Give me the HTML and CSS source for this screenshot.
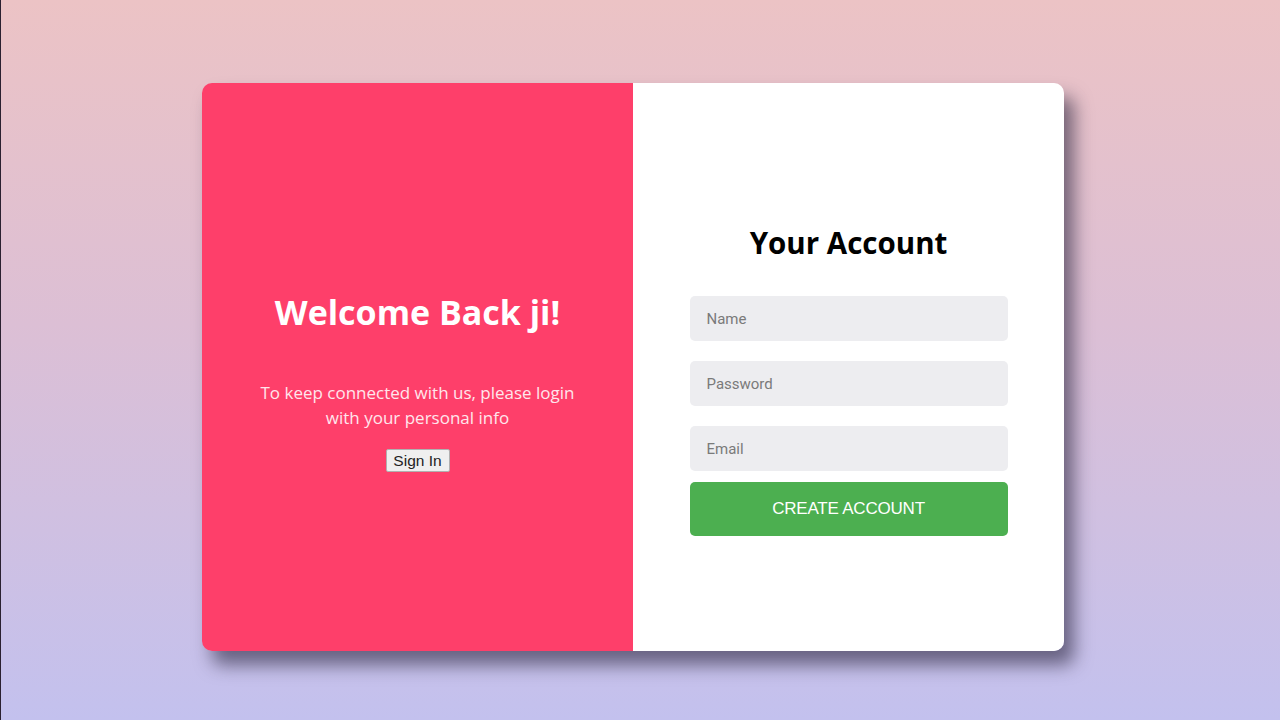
FILE: index.html
```html
<!DOCTYPE html>
<html lang="en">
<head>
<meta charset="utf-8">
<title>Your Account</title>
<link rel="stylesheet" href="styles.css">
</head>
<body>
<main class="page">
  <div class="card">
    <section class="panel panel-left">
      <h1 class="welcome">Welcome Back ji!</h1>
      <p class="lead">To keep connected with us, please login with your personal info</p>
      <button class="signin" type="button">Sign In</button>
    </section>
    <section class="panel panel-right">
      <h2 class="title">Your Account</h2>
      <form class="form">
        <input class="field" type="text" placeholder="Name">
        <input class="field" type="password" placeholder="Password">
        <input class="field" type="email" placeholder="Email">
        <button class="create" type="button">CREATE ACCOUNT</button>
      </form>
    </section>
  </div>
</main>
</body>
</html>
```
FILE: styles.css
```css
* { box-sizing: border-box; }
html, body { margin: 0; padding: 0; height: 100%; }
body {
  font-family: "Open Sans", "Noto Sans", sans-serif;
  background: linear-gradient(180deg, #ecc3c5 0%, #dcbfd5 45%, #c3c1ee 100%);
  border-left: 1px solid #2a2030;
}
.page {
  height: 720px;
  display: flex;
  justify-content: flex-start;
  padding-top: 83px;
  padding-left: 201px;
}
.card {
  width: 862px;
  height: 568px;
  display: flex;
  border-radius: 10px;
  overflow: hidden;
  box-shadow: 10px 14px 18px rgba(40, 35, 60, 0.6);
}
.panel {
  width: 431px;
  display: flex;
  flex-direction: column;
  align-items: center;
}
.panel-left {
  background: #fe3f6a;
  color: #fff;
  padding-top: 205px;
}
.welcome {
  margin: 0;
  font-family: "Open Sans", sans-serif;
  font-weight: 700;
  font-size: 34px;
  line-height: 48px;
}
.lead {
  margin: 44px 0 0;
  width: 340px;
  text-align: center;
  font-size: 17px;
  line-height: 25px;
  color: #ffe6ec;
}
.signin {
  margin-top: 19px;
  width: 64px;
  height: 23px;
  padding: 0;
  font-family: "Liberation Sans", Arial, sans-serif;
  font-size: 15.5px;
  color: #222;
  background: #efefef;
  border: 1px solid #b0b0b0;
  border-radius: 2px;
}
.panel-right {
  background: #fff;
  padding-top: 139px;
}
.title {
  margin: 0;
  font-family: "Open Sans", sans-serif;
  font-weight: 700;
  font-size: 29.5px;
  line-height: 42px;
  color: #000;
}
.form {
  margin-top: 32px;
  width: 318px;
  display: flex;
  flex-direction: column;
}
.field {
  height: 45px;
  margin-bottom: 20px;
  border: none;
  border-radius: 5px;
  background: #ededf0;
  padding: 0 17px;
  font-family: Roboto, "Liberation Sans", sans-serif;
  font-size: 15px;
  color: #333;
  outline: none;
}
.field:last-of-type { margin-bottom: 11px; }
.field::placeholder { color: #7a7a7a; }
.create {
  height: 54px;
  border: none;
  border-radius: 5px;
  background: #4caf50;
  color: #fff;
  font-family: "Liberation Sans", Arial, sans-serif;
  font-size: 17px;
  letter-spacing: -0.2px;
}
```
